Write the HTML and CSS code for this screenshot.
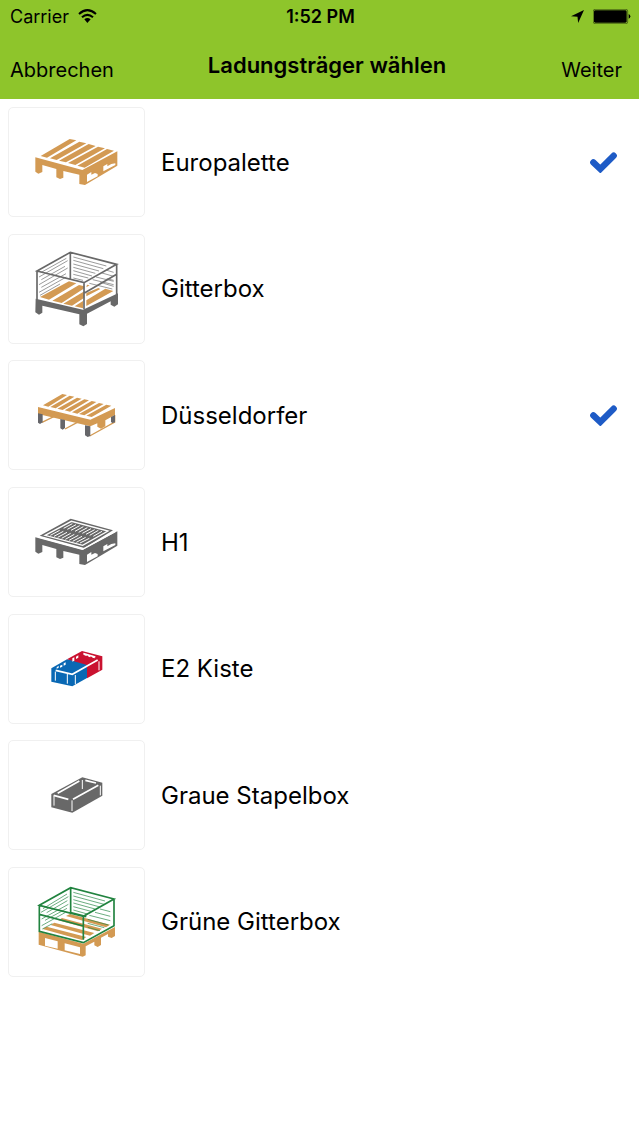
FILE: index.html
```html
<!DOCTYPE html>
<html lang="de">
<head>
<meta charset="utf-8">
<meta name="viewport" content="width=device-width, initial-scale=1">
<title>Ladungsträger wählen</title>
<link rel="stylesheet" href="styles.css">
</head>
<body>
<header class="header">
  <div class="status">
    <div class="status-left">
      <span>Carrier</span>
      <svg class="wifi" viewBox="0 0 57 42" aria-hidden="true"><path class="arc" d="M3 15Q28 -8 54 15M12 25Q28 10 45 25"/><path d="M19 31Q28 23 38 31L28 42Z"/></svg>
    </div>
    <span class="time">1:52 PM</span>
    <div class="status-right">
      <svg class="location" viewBox="0 0 40 40" aria-hidden="true"><path d="M40 0L22 40L20 21L0 19Z"/></svg>
      <svg class="battery" viewBox="0 0 114 45" aria-hidden="true"><rect class="case" x="1" y="1" width="103" height="43" rx="5"/><rect x="3" y="4" width="98" height="37" rx="4"/><path d="M107 15Q112 17 112 22Q112 27 107 29Z"/></svg>
    </div>
  </div>
  <nav class="nav">
    <button type="button" class="nav-button">Abbrechen</button>
    <h1 class="title">Ladungsträger wählen</h1>
    <button type="button" class="nav-button nav-next">Weiter</button>
  </nav>
</header>
<main>
  <ul class="list">
    <li><label class="row">
      <span class="thumb"><svg viewBox="-48 -51 405 324" aria-hidden="true">
        <g class="wood"><path d="M31 97L172 135L277 79V122L180 180L163 177V149L115 138V158L105 162L94 157V132L52 120V141L40 146L31 140Z"/>
        <path d="M47 93L134 42L154 46L66 98ZM75 100L163 50L184 55L95 105ZM102 107L191 57L212 63L123 112ZM129 114L219 65L240 70L151 120ZM157 122L246 72L267 77L179 128Z"/></g>
        <path class="hole" d="M186 149L199 141V149L210 144L218 147V154L186 171ZM235 124L247 117V124L259 117L271 115V120L235 139Z"/>
      </svg></span>
      <span class="name">Europalette</span>
      <input class="tick-input" type="checkbox" checked>
      <svg class="tick" viewBox="0 0 81 63" aria-hidden="true"><path d="M10 31L31 51L71 11"/></svg>
    </label></li>
    <li><label class="row">
      <span class="thumb"><svg viewBox="-48 -15 405 324" aria-hidden="true">
        <path class="wood" d="M45 171L132 124L154 130L72 179ZM82 182L162 135L178 139V145L110 189ZM115 191L178 154V173L141 197ZM149 199L174 183V205ZM186 134L194 136L184 142ZM184 159L220 144L226 147L184 169ZM184 181L241 146L265 153L184 198Z"/>
        <path class="mesh grey-line" d="M47 98L124 55M42 111L128 62M49 119L120 79M42 134L128 84M49 142L123 101M42 157L124 111M45 166L105 132M145 51L244 78M145 61L235 86M145 72L222 93M145 82L211 100M145 92L201 108M145 103L190 114M145 114L174 121M246 91L266 97M231 99L266 109M213 111L266 124M203 119L266 134M193 130L262 147M245 116L266 121M226 127L266 139"/>
        <path class="frame grey-line" d="M36 93L136 37L275 73L177 128ZM36 93V181M136 37V119M275 73V183M177 128V208M177 160L275 103"/>
        <path class="grey" d="M32 176L174 209L279 160V193L268 200L257 194V184L186 221V252L175 259L163 253V223L52 197V218L42 224L31 217Z"/>
      </svg></span>
      <span class="name">Gitterbox</span>
      <input class="tick-input" type="checkbox">
      <svg class="tick" viewBox="0 0 81 63" aria-hidden="true"><path d="M10 31L31 51L71 11"/></svg>
    </label></li>
    <li><label class="row">
      <span class="thumb"><svg viewBox="-48 -57 405 324" aria-hidden="true">
        <path class="wood-line" d="M51 127L94 106M120 147L157 127M194 168L269 126V105"/>
        <path class="wood" d="M39 81L196 119L270 84V105L241 121V139L228 146L217 140V130L196 139L39 102ZM54 76L112 42L126 45L70 80ZM76 81L134 47L148 50L92 85ZM97 86L156 53L170 56L113 90ZM119 91L178 58L192 61L135 95ZM141 97L200 63L214 66L157 101ZM162 102L222 69L236 72L178 106ZM184 107L244 74L259 77L200 111Z"/>
        <path class="slate" d="M39 100L53 103V127L45 132L39 128ZM106 117L120 120V144L113 149L106 145ZM180 136L196 139V168L188 171L180 166ZM258 111L270 105V127L262 129L258 126Z"/>
      </svg></span>
      <span class="name">Düsseldorfer</span>
      <input class="tick-input" type="checkbox" checked>
      <svg class="tick" viewBox="0 0 81 63" aria-hidden="true"><path d="M10 31L31 51L71 11"/></svg>
    </label></li>
    <li><label class="row">
      <span class="thumb"><svg viewBox="-48 -51 405 324" aria-hidden="true">
        <path class="grey" d="M31 97L172 135L277 79V122L180 180L163 177V149L115 138V158L105 162L94 157V132L52 120V141L40 146L31 140ZM44 92L137 41L264 76L178 129Z"/>
        <path class="rim-gap" d="M42 96L174 132L270 80"/>
        <path class="inset" d="M60 91L139 49L249 78L173 121Z"/>
        <path class="slots" d="M76 91L104 76M87 94L115 79M98 97L126 82M110 100L137 85M121 103L148 88M132 106L160 91M143 109L171 94M154 112L182 97M165 114L193 100M116 70L142 56M127 73L153 59M138 76L164 62M150 79L175 65M161 82L187 68M172 85L198 71M183 88L209 74M194 91L220 76M205 94L231 79"/>
        <path class="hole" d="M186 149L199 141V149L210 144L218 147V154L186 171ZM235 124L247 117V124L259 117L271 115V120L235 139Z"/>
      </svg></span>
      <span class="name">H1</span>
      <input class="tick-input" type="checkbox">
      <svg class="tick" viewBox="0 0 81 63" aria-hidden="true"><path d="M10 31L31 51L71 11"/></svg>
    </label></li>
    <li><label class="row">
      <span class="thumb"><svg viewBox="-48 -61 405 324" aria-hidden="true">
        <path class="blue" d="M79 99L126 72L186 84V128L142 153L79 139Z"/>
        <path class="red" d="M126 72L171 47L232 63V103L186 129V89Z"/>
        <path class="rim" d="M92 105L142 117L218 74M175 55L211 65"/>
        <path class="post" d="M91 109V136M127 116V145M151 119V147M222 78V105"/>
        <path class="hole" d="M95 96L101 91V97L95 100ZM105 91L112 88V94L105 97ZM116 84L122 81V88L116 91ZM142 69L148 66V76L142 79ZM153 64L160 60V67L153 71ZM178 55L185 57V62L178 60ZM190 58L196 60V66L190 64ZM202 61L209 63V69L202 67Z"/>
      </svg></span>
      <span class="name">E2 Kiste</span>
      <input class="tick-input" type="checkbox">
      <svg class="tick" viewBox="0 0 81 63" aria-hidden="true"><path d="M10 31L31 51L71 11"/></svg>
    </label></li>
    <li><label class="row">
      <span class="thumb"><svg viewBox="-48 -72 405 324" aria-hidden="true">
        <path class="grey" d="M79 87L172 37L232 53V92L142 143L79 127Z"/>
        <path class="rim" d="M98 85L163 48M86 91L130 103M144 103L220 61M181 46L213 54"/>
        <path class="post" d="M172 45V72M87 92V122M141 106V138M226 62V91"/>
      </svg></span>
      <span class="name">Graue Stapelbox</span>
      <input class="tick-input" type="checkbox">
      <svg class="tick" viewBox="0 0 81 63" aria-hidden="true"><path d="M10 31L31 51L71 11"/></svg>
    </label></li>
    <li><label class="row">
      <span class="thumb"><svg viewBox="-48 -22 405 324" aria-hidden="true">
        <path class="wood" d="M41 169L175 205L270 155V182L260 188L249 184V176L228 187V209L218 215L208 210V199L182 213V240L173 244L41 208ZM53 161L65 154L184 185L171 194ZM77 149L88 142L208 173L195 181ZM100 135L111 128L231 160L219 168ZM123 122L135 116L255 148L243 156Z"/>
        <path class="hole" d="M60 188L98 198V220L60 211ZM119 204L165 216V236L119 225Z"/>
        <path class="mesh green-line" d="M54 100L126 56M48 111L130 64M65 112L127 76M50 131L130 87M60 135L126 99M50 151L120 112M52 161L82 145M145 51L240 77M145 62L237 87M145 73L225 95M145 83L210 101M145 94L198 108M145 104L187 116M225 101L256 109M210 111L256 123M193 120L256 136M188 132L250 149M188 144L238 157M188 156L225 166"/>
        <path class="frame green-line" d="M43 90L137 37L267 71L175 123ZM43 90V168L175 202L267 151V71M137 37V117M175 123V193M43 117L175 152M137 112L184 124"/>
      </svg></span>
      <span class="name">Grüne Gitterbox</span>
      <input class="tick-input" type="checkbox">
      <svg class="tick" viewBox="0 0 81 63" aria-hidden="true"><path d="M10 31L31 51L71 11"/></svg>
    </label></li>
  </ul>
</main>
</body>
</html>
```
FILE: styles.css
```css
* { box-sizing: border-box; }
body {
  margin: 0;
  background: #fff;
  color: #000;
  font-family: Inter, "Noto Sans", sans-serif;
}
svg { display: block; }
.header { background: #8ec52b; }
.status {
  display: grid;
  grid-template-columns: 1fr auto 1fr;
  align-items: center;
  height: 32px;
  padding: 0 8px 0 10px;
  font-size: 18px;
}
.status-left, .status-right { display: flex; align-items: center; gap: 9px; }
.status-right { justify-content: flex-end; }
.time { font-weight: 600; }
.wifi { width: 19px; height: 14px; }
.wifi .arc { fill: none; stroke: #000; stroke-width: 6px; }
.location { width: 13px; height: 13px; }
.battery { width: 38px; height: 15px; }
.battery .case { fill: none; stroke: #35490f; stroke-width: 2px; }
.nav {
  display: grid;
  grid-template-columns: 1fr auto 1fr;
  align-items: center;
  height: 67px;
  padding: 0 17px 0 10px;
}
.nav-button {
  justify-self: start;
  padding: 8px 0 0;
  border: 0;
  background: none;
  color: inherit;
  font: 400 20px/24px Inter, "Noto Sans", sans-serif;
}
.nav-next { justify-self: end; }
.title { margin: 0; padding: 0 0 2px 22px; font-size: 22px; line-height: 28px; font-weight: 600; }
.list {
  display: grid;
  grid-auto-rows: 1fr;
  min-height: 78vh;
  margin: 0;
  padding: 0;
  list-style: none;
}
.row {
  display: flex;
  align-items: center;
  gap: 16px;
  height: 100%;
  padding: 8px 22px 8px 8px;
}
.thumb {
  flex: none;
  width: 137px;
  height: 110px;
  border: 1px solid #f0f0f0;
  border-radius: 5px;
}
.thumb svg { width: 100%; height: 100%; }
.name { flex: 1; padding-top: 1px; font-size: 24px; line-height: 32px; }
.tick-input { appearance: none; width: 0; height: 0; margin: 0; }
.tick { width: 27px; height: 21px; visibility: hidden; }
.tick path { fill: none; stroke: #1e5bc6; stroke-width: 19px; stroke-linecap: round; }
.tick-input:checked + .tick { visibility: visible; }
.wood { fill: #d39a53; }
.grey { fill: #686868; }
.slate { fill: #66666a; }
.blue { fill: #0968b4; }
.red { fill: #ca1230; }
.hole { fill: #fff; }
.wood-line { fill: none; stroke: #d39a53; stroke-width: 4px; }
.grey-line { fill: none; stroke: #686868; }
.green-line { fill: none; stroke: #21833f; }
.frame { stroke-width: 5px; }
.mesh { stroke-width: 2px; }
.rim-gap { fill: none; stroke: #fff; stroke-width: 4px; }
.inset { fill: none; stroke: #fff; stroke-width: 4px; }
.slots { fill: none; stroke: #fff; stroke-width: 3px; }
.rim { fill: none; stroke: #fff; stroke-width: 5px; }
.post { fill: none; stroke: #fff; stroke-width: 3px; }
```
